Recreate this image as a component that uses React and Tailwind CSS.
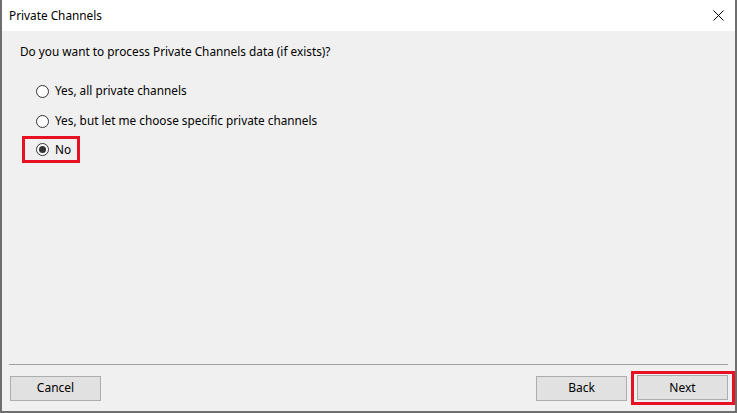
import React, { useState } from "react";

const options = [
  { id: "all", label: "Yes, all private channels" },
  { id: "choose", label: "Yes, but let me choose specific private channels" },
  { id: "no", label: "No" },
];

function Radio({ checked }) {
  return (
    <span className="w-[13px] h-[13px] rounded-full border border-[#333333] bg-white flex items-center justify-center shrink-0">
      {checked && <span className="w-[7px] h-[7px] rounded-full bg-[#333333]"></span>}
    </span>
  );
}

function Button({ children }) {
  return (
    <button className="w-[91px] h-[25px] bg-[#e1e1e1] border border-[#adadad] text-[12px] text-black">
      {children}
    </button>
  );
}

export default function App() {
  const [selected, setSelected] = useState("no");

  return (
    <div className="w-[737px] h-[413px] flex flex-col bg-[#f0f0f0] border-l-2 border-r-2 border-b-2 border-[#6e6e6e] font-['Segoe_UI','Noto_Sans',sans-serif] text-[11.8px] text-black overflow-hidden">
      {/* Title bar */}
      <div className="h-[31px] bg-white flex items-center justify-between pl-[7px] pr-[10px] shrink-0">
        <span>Private Channels</span>
        <svg width="11" height="11" viewBox="0 0 11 11" className="mr-[1px]">
          <path d="M0.5 0.5 L10.5 10.5 M10.5 0.5 L0.5 10.5" stroke="#000" strokeWidth="1" />
        </svg>
      </div>

      {/* Body */}
      <div className="flex-1 pl-[18px] pt-[12px]">
        <p className="leading-[16px]">Do you want to process Private Channels data (if exists)?</p>

        <div className="mt-[17px] flex flex-col">
          {options.map((opt) => {
            const row = (
              <label
                className="flex items-center gap-[6px] cursor-pointer"
                onClick={() => setSelected(opt.id)}
              >
                <Radio checked={selected === opt.id} />
                <span>{opt.label}</span>
              </label>
            );
            if (opt.id === "no") {
              return (
                <div key={opt.id} className="h-[30px]">
                  <div className="inline-flex items-center h-[27px] ml-[2px] pl-[11px] pr-[6px] border-[3px] border-[#e81123]">
                    {row}
                  </div>
                </div>
              );
            }
            return (
              <div key={opt.id} className="h-[30px] flex items-center pl-[16px]">
                {row}
              </div>
            );
          })}
        </div>
      </div>

      {/* Footer */}
      <div className="shrink-0">
        <div className="mx-[7px] h-px bg-[#a0a0a0]"></div>
        <div className="flex items-center justify-between pl-[8px] mt-[6px] mb-[6px]">
          <Button>Cancel</Button>
          <div className="flex items-center gap-[4px]">
            <Button>Back</Button>
            <div className="border-[3px] border-[#e81123] pt-[1px] pb-[2px] pl-[3px] pr-[4px]">
              <Button>Next</Button>
            </div>
          </div>
        </div>
      </div>
    </div>
  );
}
